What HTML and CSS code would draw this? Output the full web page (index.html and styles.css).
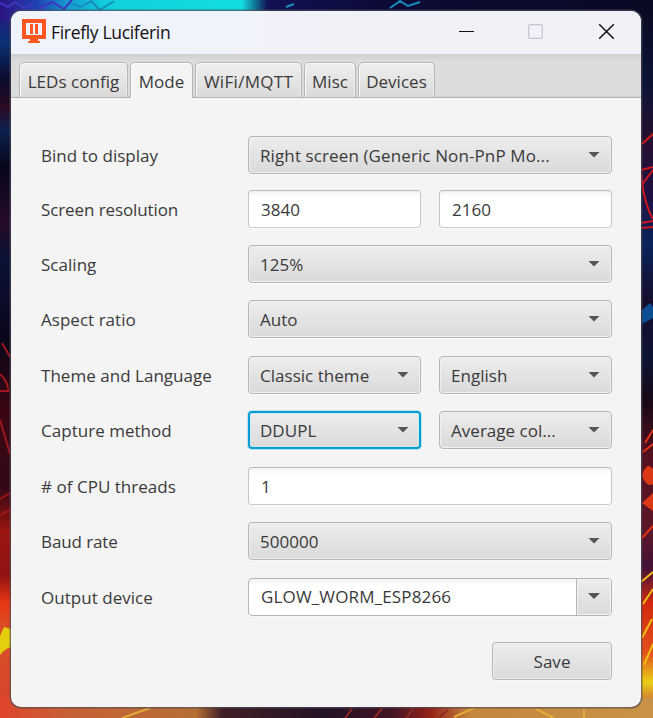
FILE: index.html
```
<!DOCTYPE html>
<html lang="en">
<head>
<meta charset="utf-8">
<title>Firefly Luciferin</title>
<link rel="stylesheet" href="styles.css">
</head>
<body>
<svg class="wallpaper" viewBox="0 0 653 718" aria-hidden="true">
  <defs>
    <linearGradient id="top"><stop offset="0" stop-color="#2b1280"/><stop offset=".06" stop-color="#1e47b5"/><stop offset=".1" stop-color="#1595cd"/><stop offset=".16" stop-color="#10cfdc"/><stop offset=".37" stop-color="#12dce0"/><stop offset=".41" stop-color="#121153"/><stop offset=".6" stop-color="#0b0b36"/><stop offset="1" stop-color="#0a0a24"/></linearGradient>
    <linearGradient id="left" x2="0" y2="1"><stop offset="0" stop-color="#301383"/><stop offset=".06" stop-color="#0a3274"/><stop offset=".11" stop-color="#0b0b2c"/><stop offset=".15" stop-color="#2c0a22"/><stop offset=".18" stop-color="#0c2150"/><stop offset=".23" stop-color="#07071c"/><stop offset=".31" stop-color="#260b28"/><stop offset=".36" stop-color="#0b1236"/><stop offset=".48" stop-color="#0a061a"/><stop offset=".57" stop-color="#3a0711"/><stop offset=".68" stop-color="#350817"/><stop offset=".74" stop-color="#9a160f"/><stop offset=".8" stop-color="#8f1212"/><stop offset=".84" stop-color="#e83714"/><stop offset=".88" stop-color="#d85227"/><stop offset="1" stop-color="#d9422c"/></linearGradient>
    <linearGradient id="right" x2="0" y2="1"><stop offset="0" stop-color="#090a22"/><stop offset=".12" stop-color="#0d1436"/><stop offset=".19" stop-color="#26102f"/><stop offset=".27" stop-color="#211044"/><stop offset=".34" stop-color="#09245a"/><stop offset=".42" stop-color="#150c2c"/><stop offset=".5" stop-color="#0d1433"/><stop offset=".56" stop-color="#180817"/><stop offset=".63" stop-color="#551020"/><stop offset=".74" stop-color="#5d1728"/><stop offset=".79" stop-color="#421138"/><stop offset=".84" stop-color="#d3280e"/><stop offset=".91" stop-color="#e3521b"/><stop offset=".95" stop-color="#ead016"/><stop offset=".97" stop-color="#d78b31"/><stop offset="1" stop-color="#c69344"/></linearGradient>
    <linearGradient id="bottom"><stop offset="0" stop-color="#df442c"/><stop offset=".1" stop-color="#c86035"/><stop offset=".3" stop-color="#b66f35"/><stop offset=".34" stop-color="#402026"/><stop offset=".5" stop-color="#231226"/><stop offset=".6" stop-color="#431425"/><stop offset=".66" stop-color="#962319"/><stop offset=".72" stop-color="#c5863d"/><stop offset="1" stop-color="#c79247"/></linearGradient>
    <filter id="soft" filterUnits="userSpaceOnUse" x="0" y="0" width="653" height="718"><feGaussianBlur stdDeviation=".7"/></filter>
  </defs>
  <rect width="653" height="718" fill="#111"/>
  <rect width="20" height="718" fill="url(#left)"/>
  <rect x="633" width="20" height="718" fill="url(#right)"/>
  <rect width="653" height="20" fill="url(#top)"/>
  <rect y="698" width="653" height="20" fill="url(#bottom)"/>
  <g filter="url(#soft)">
    <g fill="none" stroke-width="2">
      <path d="M0 3l8 4 7-5 9 6 9-4M38 9l14-7 12 7 8-9" stroke="#3e35bd"/>
      <path d="M72 4l9 3 10-6 9 9 14-9M286 7l8-3M390 8l10-7 8 5 12-4" stroke="#178cbd"/>
      <path d="M642 144l11-10M641 170l12-3M641 173q3 31 12 46M653 170l-12 16M641 223l12-2M641 228l12-1" stroke="#cf171c"/>
      <path d="M0 374q9 9 8 17H0M2 343l8 14M0 420l10 34M0 499l10-6M0 515l10-5" stroke="#9e151a"/>
      <path d="M645 443l8-13M643 452l10-8M642 538l11-12" stroke="#df3219"/>
      <path d="M641 582l12-10M643 604l10-15M642 638l10-19M644 665l9-21" stroke="#edbd18"/>
      <path d="M345 718l7-9M374 718l8-9M406 718l8-10M439 717l9-7" stroke="#8d2924"/>
      <path d="M122 718l28-10M454 717l20-9M536 709l18 9M584 709v9" stroke="#e2aa3a"/>
    </g>
    <path d="M0 636l4-9 7 2v18q-5 1-11 8z" fill="#e3cf0d"/>
    <path d="M642 475q5-14 11-6v15q-7 4-11-9zM642 503l11-10v18z" fill="#dc3919"/>
    <path d="M642 310l8-7 3 4v11l-11 6z" fill="#0b4d91"/>
  </g>
</svg>

<main class="window">
  <header class="titlebar">
    <svg class="app-icon" viewBox="0 0 24 24"><path fill="#ff5722" fill-rule="evenodd" d="M0 0h24v20h-8v2h2v2H6v-2h2v-2H0zM4 4v12h16V4z"/><path fill="#ff5722" d="M8 5h3v10H8zM13 5h3v10h-3z"/></svg>
    <h1 class="title">Firefly Luciferin</h1>
    <svg class="window-buttons" viewBox="0 0 160 20"><path d="M3 10.5h15" stroke="#111" stroke-width="1.1"/><rect x="72.7" y="3.7" width="13.6" height="13.6" rx="1.5" fill="none" stroke="#c3c4c9" stroke-width="1.2"/><path d="M143.2 3.2l14.6 14.6M157.8 3.2l-14.6 14.6" stroke="#111" stroke-width="1.5"/></svg>
  </header>
  <nav class="tabs">
    <span class="tab leds">LEDs config</span>
    <span class="tab mode active">Mode</span>
    <span class="tab wifi">WiFi/MQTT</span>
    <span class="tab misc">Misc</span>
    <span class="tab devices">Devices</span>
  </nav>
  <section class="form">
    <span class="label">Bind to display</span>
    <div class="control wide"><span class="bind">Right screen (Generic Non-PnP Mo...</span><i class="arrow"></i></div>
    <span class="label tight">Screen resolution</span>
    <div class="control field">3840</div>
    <div class="control field">2160</div>
    <span class="label">Scaling</span>
    <div class="control wide"><span>125%</span><i class="arrow"></i></div>
    <span class="label">Aspect ratio</span>
    <div class="control wide"><span>Auto</span><i class="arrow"></i></div>
    <span class="label">Theme and Language</span>
    <div class="control"><span>Classic theme</span><i class="arrow"></i></div>
    <div class="control"><span>English</span><i class="arrow"></i></div>
    <span class="label">Capture method</span>
    <div class="control focused"><span>DDUPL</span><i class="arrow"></i></div>
    <div class="control"><span>Average col...</span><i class="arrow"></i></div>
    <span class="label">#&nbsp;of CPU threads</span>
    <div class="control field wide">1</div>
    <span class="label tight">Baud rate</span>
    <div class="control wide"><span>500000</span><i class="arrow"></i></div>
    <span class="label">Output device</span>
    <div class="control field wide editable"><span class="output">GLOW_WORM_ESP8266</span><div class="drop"><i class="arrow"></i></div></div>
  </section>
  <footer class="actions"><div class="control save">Save</div></footer>
</main>
</body>
</html>
```

FILE: styles.css
```
* { box-sizing: border-box; }

body {
  margin: 0;
  width: 653px;
  height: 718px;
  padding: 11px;
  overflow: hidden;
  font: 400 17px/24px "Open Sans", "Noto Sans", sans-serif;
  letter-spacing: 0.03px;
  color: #3a3a3a;
}

.wallpaper {
  position: absolute;
  inset: 0;
  z-index: -1;
  width: 653px;
  height: 718px;
}

.window {
  width: 630px;
  height: 696px;
  overflow: hidden;
  border-radius: 10px;
  background: #f4f4f4;
  box-shadow: 0 0 0 1.5px rgba(75, 75, 85, .65);
}

.titlebar {
  display: flex;
  align-items: center;
  height: 43px;
  padding: 0 25px 3px 11px;
  background: linear-gradient(90deg, #eff3fc, #f1f2f8 50%);
}

.app-icon { width: 24px; height: 24px; }

.title {
  flex: 1;
  margin: 2px 0 0 5px;
  font-size: 17.5px;
  font-weight: 400;
  letter-spacing: -0.32px;
  color: #111;
}

.window-buttons { width: 160px; height: 20px; }

.tabs {
  display: flex;
  align-items: flex-end;
  gap: 2px;
  height: 44px;
  padding-left: 8px;
  background: linear-gradient(#cecece, #dcdcdc 7px, #dcdcdc 41px, #d0d0d0 43px);
  box-shadow: inset 0 -1px #b5b5b5;
}

.tab {
  height: 36px;
  padding-top: 8px;
  border: 1px solid #b5b5b5;
  border-radius: 5px 5px 0 0;
  background: linear-gradient(#efefef, #dadada);
  box-shadow: inset 1px 1px #fafafa, inset -1px 0 #ededed;
  text-align: center;
  line-height: 22px;
  white-space: nowrap;
}

.tab.active {
  border-bottom: 0;
  background: #f4f4f4;
  box-shadow: inset 1px 1px #fff;
}

.leds { width: 109px; }
.mode { width: 63px; }
.wifi { width: 107px; letter-spacing: 0.3px; }
.misc { width: 52px; }
.devices { width: 77px; }

.form {
  display: grid;
  grid-template-columns: 189px 173px 173px;
  grid-template-rows: 54px 55px 55px 56px 55px 56px 55px 56px 38px;
  align-items: start;
  column-gap: 18px;
  padding: 38px 29px 0 30px;
}

.label {
  grid-column: 1;
  padding-top: 8px;
  line-height: 24px;
  white-space: nowrap;
}

.tight { letter-spacing: -0.1px; }

.control {
  display: flex;
  align-items: center;
  justify-content: space-between;
  height: 38px;
  padding: 1px 11px 0;
  border: 1px solid #b5b5b5;
  border-radius: 4px;
  background: linear-gradient(#ededed, #dadada);
  box-shadow: inset 0 0 0 1px #f0f0f0, inset 0 1px #fbfbfb, 0 1px #fafafa;
  white-space: nowrap;
}

.wide { grid-column: 2 / 4; }

.field {
  padding-left: 12px;
  border-color: #b9b9b9 #c5c5c5 #cacaca;
  background: linear-gradient(#f2f2f2, #fff 6px);
  box-shadow: 0 1px #fafafa;
}

.focused {
  border: 2px solid #039ed3;
  padding: 1px 10px 0;
  box-shadow: inset 0 0 0 1px #d4e7ed, 0 0 0 1px #bee2ed;
}

.bind { letter-spacing: 0.11px; }
.output { letter-spacing: 0.15px; }

.arrow {
  width: 12px;
  height: 6px;
  margin-top: -2px;
  background: #555;
  clip-path: polygon(0 0, 100% 0, 50% 100%);
}

.editable {
  padding: 0 0 0 12px;
  border-color: #b5b5b5;
}

.drop {
  display: flex;
  align-items: center;
  justify-content: center;
  width: 35px;
  height: 36px;
  border-left: 1px solid #b5b5b5;
  border-radius: 0 3px 3px 0;
  background: linear-gradient(#ededed, #dadada);
  box-shadow: inset 0 0 0 1px #f2f2f2;
}

.actions {
  display: flex;
  justify-content: flex-end;
  padding: 26px 29px 0;
}

.save {
  width: 120px;
  justify-content: center;
}
```
